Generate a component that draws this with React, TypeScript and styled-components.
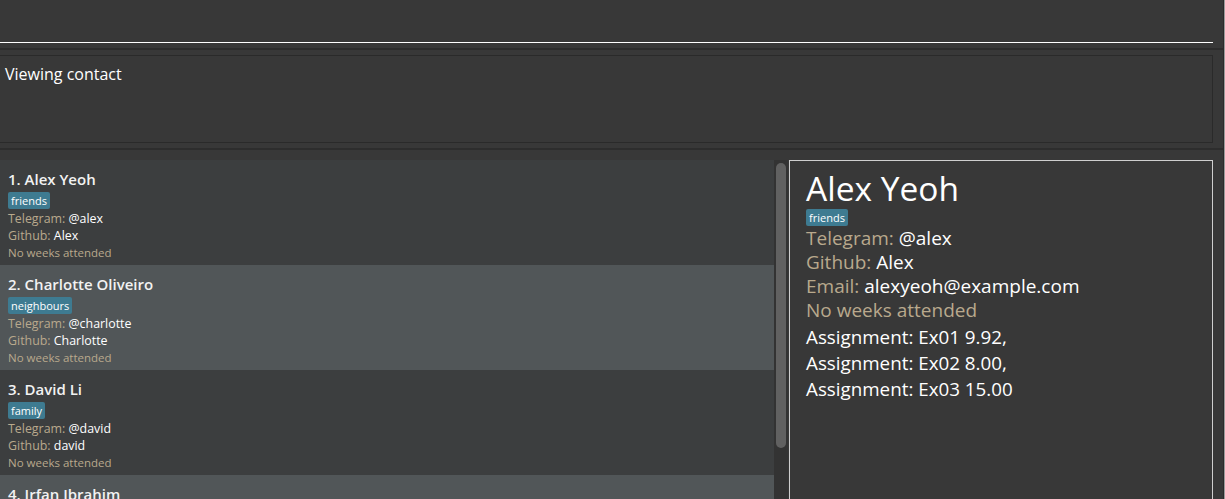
import * as React from "react"
import styled, { createGlobalStyle } from "styled-components"

const GlobalStyle = createGlobalStyle`
  html, body {
    margin: 0;
    padding: 0;
    background: #383838;
    font-family: "Segoe UI", "Open Sans", "Noto Sans", sans-serif;
    overflow: hidden;
  }
`

const Window = styled.div`
  display: flex;
  width: 1225px;
  height: 499px;
  background: #383838;
`

const Main = styled.div`
  flex: 1;
  display: flex;
  flex-direction: column;
  min-width: 0;
`

const EdgeBar = styled.div`
  width: 2px;
  display: flex;
  & > div:first-child { width: 1px; background: #2b2b2b; }
  & > div:last-child { width: 1px; background: #9a9a9a; }
`

const CommandPane = styled.div`
  height: 48px;
  padding-right: 10px;
  display: flex;
  flex-direction: column;
`

const CommandInput = styled.div`
  height: 42px;
  border-bottom: 1px solid #ffffff;
`

const Splitter = styled.div`
  height: 2px;
  background: #2d2d2d;
`

const ResultPane = styled.div`
  height: 98px;
  padding: 5px 10px 5px 0;
  box-sizing: border-box;
`

const ResultBox = styled.div`
  height: 100%;
  box-sizing: border-box;
  border: 1px solid #2a2a2a;
  border-left: none;
  padding: 8px 5px;
  color: #ffffff;
  font-size: 16px;
  line-height: 20px;
`

const ContentArea = styled.div`
  flex: 1;
  display: flex;
  padding-top: 10px;
  min-height: 0;
  padding-right: 10px;
`

const ListColumn = styled.div`
  width: 774px;
  display: flex;
  flex-direction: column;
  overflow: hidden;
`

const Card = styled.div<{ $alt: boolean }>`
  height: 105px;
  flex-shrink: 0;
  box-sizing: border-box;
  padding: 9px 8px 0;
  background: ${p => (p.$alt ? "#515658" : "#3c3e3f")};
  display: flex;
  flex-direction: column;
  align-items: flex-start;
`

const CardName = styled.div`
  color: #f2f2f2;
  font-size: 15px;
  font-weight: 600;
  line-height: 20px;
`

const Tag = styled.span<{ $mt: number; $mb: number }>`
  background: #3e7b91;
  color: #ffffff;
  font-size: 11px;
  line-height: 15px;
  padding: 1px 3px;
  border-radius: 2px;
  margin: ${p => p.$mt}px 0 ${p => p.$mb}px;
`

const Field = styled.div<{ $size: number; $lh: number }>`
  font-size: ${p => p.$size}px;
  line-height: ${p => p.$lh}px;
  color: #ffffff;
  white-space: nowrap;
`

const Label = styled.span`
  color: #b9a98d;
`

const Muted = styled.div<{ $size: number; $lh: number }>`
  font-size: ${p => p.$size}px;
  line-height: ${p => p.$lh}px;
  color: #b9a98d;
  white-space: nowrap;
`

const ScrollTrack = styled.div`
  width: 14px;
  background: #333333;
  display: flex;
  justify-content: center;
  padding-top: 3px;
  box-sizing: border-box;
`

const ScrollThumb = styled.div`
  width: 10px;
  height: 285px;
  background: #616161;
  border-radius: 5px;
`

const DetailPanel = styled.div`
  flex: 1;
  margin-left: 1px;
  border: 1px solid #cfcfcf;
  border-bottom: none;
  padding: 8px 16px;
  display: flex;
  flex-direction: column;
  align-items: flex-start;
`

const DetailName = styled.div`
  color: #ffffff;
  font-size: 33.5px;
  line-height: 38px;
`

const Assignments = styled.div`
  margin-top: 2px;
`

const people = [
  { name: "Alex Yeoh", tag: "friends", tg: "@alex", gh: "Alex" },
  { name: "Charlotte Oliveiro", tag: "neighbours", tg: "@charlotte", gh: "Charlotte" },
  { name: "David Li", tag: "family", tg: "@david", gh: "david" },
  { name: "Irfan Ibrahim", tag: "classmates", tg: "@irfan", gh: "irfan" },
]

export default function App() {
  return (
    <>
      <GlobalStyle />
      <Window>
        <Main>
          <CommandPane>
            <CommandInput />
          </CommandPane>
          <Splitter />
          <ResultPane>
            <ResultBox>Viewing contact</ResultBox>
          </ResultPane>
          <Splitter />
          <ContentArea>
            <ListColumn>
              {people.map((p, i) => (
                <Card key={p.name} $alt={i % 2 === 1}>
                  <CardName>{i + 1}. {p.name}</CardName>
                  <Tag $mt={3} $mb={1}>{p.tag}</Tag>
                  <Field $size={12.4} $lh={17}><Label>Telegram: </Label>{p.tg}</Field>
                  <Field $size={12.4} $lh={17}><Label>Github: </Label>{p.gh}</Field>
                  <Muted $size={11.5} $lh={17}>No weeks attended</Muted>
                </Card>
              ))}
            </ListColumn>
            <ScrollTrack>
              <ScrollThumb />
            </ScrollTrack>
            <DetailPanel>
              <DetailName>Alex Yeoh</DetailName>
              <Tag $mt={2} $mb={0}>friends</Tag>
              <Field $size={19} $lh={24}><Label>Telegram: </Label>@alex</Field>
              <Field $size={19} $lh={24}><Label>Github: </Label>Alex</Field>
              <Field $size={19} $lh={24}><Label>Email: </Label>alexyeoh@example.com</Field>
              <Muted $size={19} $lh={24}>No weeks attended</Muted>
              <Assignments>
                <Field $size={18.8} $lh={26}>Assignment: Ex01 9.92,</Field>
                <Field $size={18.8} $lh={26}>Assignment: Ex02 8.00,</Field>
                <Field $size={18.8} $lh={26}>Assignment: Ex03 15.00</Field>
              </Assignments>
            </DetailPanel>
          </ContentArea>
        </Main>
        <EdgeBar><div /><div /></EdgeBar>
      </Window>
    </>
  )
}
